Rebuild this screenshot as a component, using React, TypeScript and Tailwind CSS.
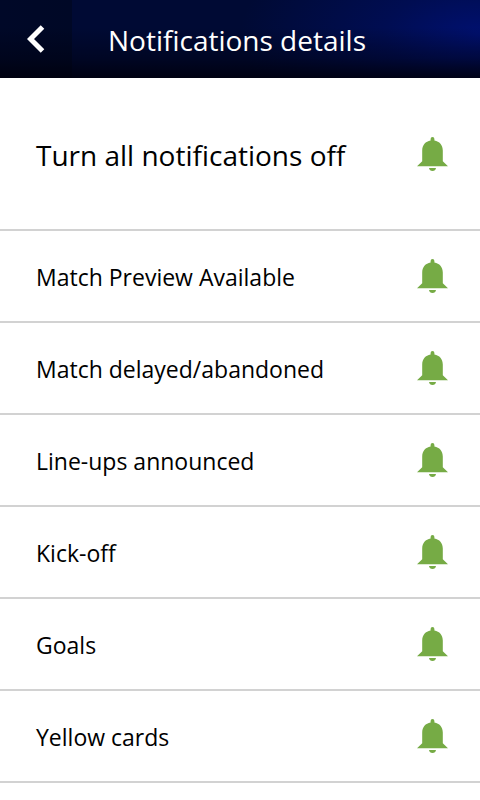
import { useState } from "react";

const ITEMS = [
  "Match Preview Available",
  "Match delayed/abandoned",
  "Line-ups announced",
  "Kick-off",
  "Goals",
  "Yellow cards",
];

function BellIcon() {
  return (
    <svg aria-hidden="true" viewBox="0 0 31 34" className="h-[34px] w-[31px]" fill="currentColor">
      <path d="M13.6 3.6V2a1.9 1.9 0 0 1 3.8 0v1.6C22.5 4.4 25.8 8.3 25.8 13.4V24.2L31 29.2H0L5.2 24.2V13.4C5.2 8.3 8.5 4.4 13.6 3.6Z" />
      <path d="M12 31H19C18.8 33 17.4 34 15.5 34S12.2 33 12 31Z" />
    </svg>
  );
}

type BellButtonProps = { label: string; on: boolean; onClick: () => void };

function BellButton({ label, on, onClick }: BellButtonProps) {
  return (
    <button
      type="button"
      aria-label={label}
      aria-pressed={on}
      onClick={onClick}
      className={on ? "shrink-0 text-[#76ab45]" : "shrink-0 text-gray-300"}
    >
      <BellIcon />
    </button>
  );
}

export default function App() {
  const [enabled, setEnabled] = useState<boolean[]>(ITEMS.map(() => true));
  const anyOn = enabled.some(Boolean);

  return (
    <div className="min-h-screen bg-white font-['Open_Sans','Noto_Sans',sans-serif] text-black">
      <header className="flex h-[78px] items-center bg-[linear-gradient(to_bottom,transparent_35%,rgba(0,0,12,0.4)_75%,rgba(0,0,12,0.85)_100%),radial-gradient(ellipse_50%_150%_at_100%_45%,#001070_0%,#000d52_40%,transparent_100%),linear-gradient(to_right,#000828_0%,#000826_15%,#000a34_15%,#000a34_100%)] text-white">
        <button type="button" aria-label="Back" className="flex h-full w-[72px] shrink-0 items-center justify-center">
          <svg aria-hidden="true" viewBox="0 0 18 28" className="h-7 w-[18px]" fill="none" stroke="currentColor" strokeWidth="5">
            <path d="M15.5 2L3.5 14L15.5 26" />
          </svg>
        </button>
        <h1 className="pt-0.5 pl-9 text-[28px] leading-10">Notifications details</h1>
      </header>
      <main>
        <section className="flex h-[153px] items-center justify-between border-b-2 border-[#d2d2d2] pr-8 pl-9">
          <h2 className="pt-0.5 text-[28px] leading-10">Turn all notifications off</h2>
          <BellButton
            label="Turn all notifications off"
            on={anyOn}
            onClick={() => setEnabled(ITEMS.map(() => !anyOn))}
          />
        </section>
        <ul>
          {ITEMS.map((item, i) => (
            <li key={item} className="flex h-[92px] items-center justify-between border-b-2 border-[#d2d2d2] pr-8 pl-9">
              <span className="pt-0.5 text-[23px] leading-8">{item}</span>
              <BellButton
                label={item}
                on={enabled[i]}
                onClick={() => setEnabled(enabled.map((v, j) => (j === i ? !v : v)))}
              />
            </li>
          ))}
        </ul>
      </main>
    </div>
  );
}
